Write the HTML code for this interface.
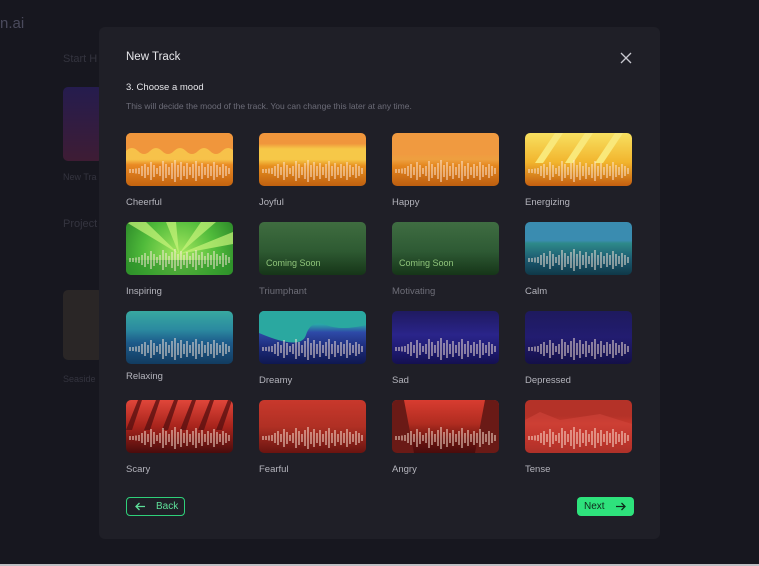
<!DOCTYPE html>
<html><head><style>
*{margin:0;padding:0;box-sizing:border-box}
body{width:759px;height:566px;background:#17171f;font-family:"Liberation Sans",sans-serif;position:relative;overflow:hidden}
.bg{position:absolute;color:#34343f;font-size:11px}
.modal{position:absolute;left:99px;top:27px;width:561px;height:512px;background:#1f1f27;border-radius:6px}
.t{position:absolute;color:#e6e6ea}
.card{position:absolute;width:107px;height:53px;border-radius:5px;overflow:hidden}
.card svg{position:absolute;left:0;top:0}
.lab{position:absolute;font-size:9.5px;color:#b4b4bc}
.cs{position:absolute;left:7px;top:36px;font-size:9px;color:#8fc47a}
.btn{position:absolute;height:19px;border-radius:4px;font-size:10px;line-height:17px}
</style></head><body>
<div class="bg" style="left:0;top:15px;font-size:15px;color:#4a4a5c">n.ai</div>
<div class="bg" style="left:63px;top:53px">Start H</div>
<div style="position:absolute;left:63px;top:87px;width:40px;height:74px;border-radius:5px;background:linear-gradient(#251c4e,#3e1c34)"></div>
<div class="bg" style="left:63px;top:172px;font-size:9px">New Tra</div>
<div class="bg" style="left:63px;top:218px">Project</div>
<div style="position:absolute;left:63px;top:290px;width:40px;height:70px;border-radius:5px;background:#2a2626"></div>
<div class="bg" style="left:63px;top:374px;font-size:9px">Seaside</div>
<div style="position:absolute;left:0;top:564px;width:759px;height:2px;background:#bfbfc4"></div>

<svg width="0" height="0" style="position:absolute"><defs>
<path id="w" d="M4 36v4M7 36v4M10 35.5v5M13 35v6M16 33v10M19 31v14M22 34v8M25 29v18M28 32v12M31 35v6M34 33v10M37 28v20M40 31v14M43 34v8M46 30v16M49 27v22M52 32v12M55 29v18M58 33v10M61 30v16M64 34v8M67 31v14M70 28v20M73 33v10M76 30v16M79 34v8M82 31v14M85 33v10M88 29v18M91 32v12M94 34v8M97 31v14M100 33v10M103 35v6" stroke="rgba(255,235,220,.8)" stroke-width="1.2"/>
</defs></svg>

<div class="modal">
<div class="t" style="left:27px;top:24px;font-size:11.5px">New Track</div>
<svg style="position:absolute;left:521px;top:25px" width="12" height="12"><path d="M1 1L11 11M11 1L1 11" stroke="#c8c8d0" stroke-width="1.3"/></svg>
<div class="t" style="left:27px;top:55px;font-size:9.5px">3. Choose a mood</div>
<div class="t" style="left:27px;top:74px;font-size:8.5px;color:#6c6c78">This will decide the mood of the track. You can change this later at any time.</div>
</div>

<div class="card" style="left:126px;top:133px;background:linear-gradient(#f0963c 0 25%,#f7c24a 25% 50%,#e98a24 60%,#c46410)"><svg width="107" height="53"><path d="M0 18q6-6 12 0t12 0t12 0t12 0t12 0t12 0t12 0t12 0t12 0V0H0z" fill="#f0963c"/><use href="#w"/></svg></div>
<div class="lab" style="left:126px;top:197px">Cheerful</div>
<div class="card" style="left:259px;top:133px;background:linear-gradient(#f0963c 0 20%,#f6c848 30% 50%,#e7901f 62%,#bf6010)"><svg width="107" height="53"><use href="#w"/></svg></div>
<div class="lab" style="left:259px;top:197px">Joyful</div>
<div class="card" style="left:392px;top:133px;background:linear-gradient(#f09a40 0 40%,#eea040 50%,#e4861e 62%,#bc5e10)"><svg width="107" height="53"><use href="#w"/></svg></div>
<div class="lab" style="left:392px;top:197px">Happy</div>
<div class="card" style="left:525px;top:133px;background:linear-gradient(#f7e060,#f2b52e 55%,#c45e10)"><svg width="107" height="53"><path d="M10 30L30 0h8L18 30zM40 30L60 0h8L48 30zM70 30L90 0h8L78 30z" fill="#f9e87a"/><use href="#w"/></svg></div>
<div class="lab" style="left:525px;top:197px">Energizing</div>

<div class="card" style="left:126px;top:222px;background:radial-gradient(circle at 50% 60%,#a6e860,#4fba3a 60%,#2d8a2a)"><svg width="107" height="53"><path d="M53 32L0 0h20zM53 32L40 0h10zM53 32L75 0h15zM53 32L107 10v12z" fill="#c9f37a" opacity=".7"/><rect y="38" width="107" height="15" fill="#2a8e28" opacity=".6"/><use href="#w"/></svg></div>
<div class="lab" style="left:126px;top:286px">Inspiring</div>
<div class="card" style="left:259px;top:222px;background:linear-gradient(#3f6d40,#2e5a32 55%,#163518)"><div class="cs">Coming Soon</div></div>
<div class="lab" style="left:259px;top:286px;color:#6e6e78">Triumphant</div>
<div class="card" style="left:392px;top:222px;background:linear-gradient(#3f6d42,#2e5a34 55%,#163518)"><div class="cs">Coming Soon</div></div>
<div class="lab" style="left:392px;top:286px;color:#6e6e78">Motivating</div>
<div class="card" style="left:525px;top:222px;background:linear-gradient(#3a8cb0 0 35%,#2e8a8a 40%,#1c5a70 70%,#0f3848)"><svg width="107" height="53"><use href="#w"/></svg></div>
<div class="lab" style="left:525px;top:286px">Calm</div>

<div class="card" style="left:126px;top:311px;background:linear-gradient(#38a8a0,#2b8aa0 35%,#1d5a8a 60%,#123c60)"><svg width="107" height="53"><use href="#w"/></svg></div>
<div class="lab" style="left:126px;top:371px">Relaxing</div>
<div class="card" style="left:259px;top:311px;background:linear-gradient(#2aa8a8 0 25%,#2e4aa8 40%,#1c2a78 70%,#0f1850)"><svg width="107" height="53"><path d="M0 0h107v14q-25 6-40 0t-20 10t-47-2z" fill="#2aa8a0"/><use href="#w"/></svg></div>
<div class="lab" style="left:259px;top:375px">Dreamy</div>
<div class="card" style="left:392px;top:311px;background:linear-gradient(#1f1a60,#2a248a 45%,#1e1a70 75%,#141050)"><svg width="107" height="53"><use href="#w"/></svg></div>
<div class="lab" style="left:392px;top:375px">Sad</div>
<div class="card" style="left:525px;top:311px;background:linear-gradient(#1e1a5e,#221c70 50%,#141048)"><svg width="107" height="53"><use href="#w"/></svg></div>
<div class="lab" style="left:525px;top:375px">Depressed</div>

<div class="card" style="left:126px;top:400px;background:linear-gradient(#e0463a,#a8241c 50%,#4a0c0c)"><svg width="107" height="53"><path d="M0 30L12 0h4L6 30zM18 30L30 0h4L24 30zM36 30L48 0h4L42 30zM54 30L66 0h4L60 30zM72 30L84 0h4L78 30zM90 30L102 0h4L96 30z" fill="#5a1010" opacity=".8"/><use href="#w"/></svg></div>
<div class="lab" style="left:126px;top:464px">Scary</div>
<div class="card" style="left:259px;top:400px;background:linear-gradient(#c8382c,#b03024 50%,#6a1410)"><svg width="107" height="53"><use href="#w"/></svg></div>
<div class="lab" style="left:259px;top:464px">Fearful</div>
<div class="card" style="left:392px;top:400px;background:linear-gradient(#d83c30,#b02c20 45%,#6a1410 75%,#4a0c0c)"><svg width="107" height="53"><path d="M0 0h12l10 53H0zM107 0h-14l-10 53h24z" fill="#6a1a16"/><use href="#w"/></svg></div>
<div class="lab" style="left:392px;top:464px">Angry</div>
<div class="card" style="left:525px;top:400px;background:linear-gradient(#b43228 0 30%,#c8382c 45%,#a82018 75%,#7a1410)"><svg width="107" height="53"><path d="M0 20L15 12L35 20L75 14L107 24V53H0z" fill="#d0443a" opacity=".6"/><use href="#w"/></svg></div>
<div class="lab" style="left:525px;top:464px">Tense</div>

<div class="btn" style="left:126px;top:497px;width:59px;border:1px solid #2fd07a;color:#5ee09a;padding-left:29px">Back
<svg style="position:absolute;left:8px;top:4px" width="11" height="9"><path d="M10 4.5H1M4.5 1L1 4.5L4.5 8" stroke="#5ee09a" stroke-width="1.3" fill="none"/></svg></div>
<div class="btn" style="left:577px;top:497px;width:57px;background:#2ee27c;color:#0f2a1a;padding:1px 0 0 7px">Next
<svg style="position:absolute;left:38px;top:5px" width="11" height="9"><path d="M1 4.5H10M6.5 1L10 4.5L6.5 8" stroke="#0f2a1a" stroke-width="1.3" fill="none"/></svg></div>
</body></html>
